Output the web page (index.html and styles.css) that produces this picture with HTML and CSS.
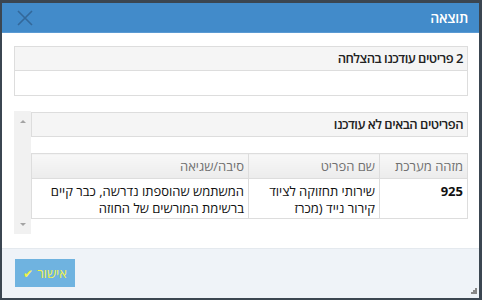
FILE: index.html
```html
<!DOCTYPE html>
<html lang="he" dir="rtl">
<head>
    <meta charset="UTF-8">
    <title>תוצאה</title>
    <link rel="stylesheet" href="styles.css">
</head>
<body>
    <div class="dialog">
        <div class="dialog-head">
            <span class="dialog-title">תוצאה</span>
            <svg class="close" width="16" height="16" viewBox="0 0 16 16">
                <path d="M1 1 L15 15 M15 1 L1 15" stroke="#33689a" stroke-width="1.6" fill="none"/>
            </svg>
        </div>

        <div class="dialog-body">
            <div class="panel">
                <div class="panel-head">2 פריטים עודכנו בהצלחה</div>
                <div class="panel-body"></div>
            </div>

            <div class="scroll-box">
                <div class="scroll-content">
                    <div class="panel-head boxed">הפריטים הבאים לא עודכנו</div>

                    <table>
                        <thead>
                            <tr>
                                <th class="col-id">מזהה מערכת</th>
                                <th class="col-name">שם הפריט</th>
                                <th>סיבה/שגיאה</th>
                            </tr>
                        </thead>
                        <tbody>
                            <tr>
                                <td class="col-id"><b>925</b></td>
                                <td class="col-name">שירותי תחזוקה לציוד קירור נייד (מכרז</td>
                                <td>המשתמש שהוספתו נדרשה, כבר קיים ברשימת המורשים של החוזה</td>
                            </tr>
                        </tbody>
                    </table>
                </div>
                <div class="scrollbar">
                    <span class="arrow up"></span>
                    <span class="arrow down"></span>
                </div>
            </div>
        </div>

        <div class="dialog-foot">
            <button class="btn-ok">אישור <span class="check">&#10004;</span></button>
        </div>

        <svg class="grip" width="7" height="7" viewBox="0 0 7 7">
            <rect x="5" y="0" width="2" height="2" fill="#888"/>
            <rect x="3" y="2" width="2" height="2" fill="#888"/>
            <rect x="5" y="2" width="2" height="2" fill="#888"/>
            <rect x="1" y="4" width="2" height="2" fill="#888"/>
            <rect x="3" y="4" width="2" height="2" fill="#888"/>
            <rect x="5" y="4" width="2" height="2" fill="#888"/>
        </svg>
    </div>
</body>
</html>
```

FILE: styles.css
```css
* {
    box-sizing: border-box;
}

html, body {
    margin: 0;
    height: 300px;
    overflow: hidden;
}

body {
    background-color: #3b4651;
    font-family: "Open Sans", "Liberation Sans", sans-serif;
    font-size: 13px;
    color: #393939;
}

.dialog {
    position: relative;
    margin: 3px 3px 0 2px;
    width: 477px;
    height: 295px;
    background-color: #fff;
    display: flex;
    flex-direction: column;
}

.dialog-head {
    height: 30px;
    background-color: #428bca;
    border-bottom: 1px solid #5a9ad3;
    display: flex;
    align-items: center;
    justify-content: space-between;
    padding: 0 11px 0 15px;
}

.dialog-title {
    color: #fff;
    font-weight: 600;
    font-size: 14px;
    letter-spacing: -0.3px;
}

.dialog-body {
    flex: 1;
    padding: 13px 11px 13px 12px;
}

.panel {
    border: 1px solid #ddd;
}

.panel-head {
    height: 24px;
    line-height: 23px;
    background-color: #f5f5f5;
    border-bottom: 1px solid #ddd;
    padding: 0 4px;
    font-weight: 600;
    letter-spacing: -0.5px;
    color: #222;
}

.panel-body {
    height: 24px;
}

.scroll-box {
    margin-top: 15px;
    height: 123px;
    display: flex;
}

.scroll-content {
    flex: 1;
    padding-top: 1px;
}

.boxed {
    height: 25px;
    border: 1px solid #ddd;
}

.scrollbar {
    width: 17px;
    background-color: #f1f1f1;
    display: flex;
    flex-direction: column;
    justify-content: space-between;
    align-items: center;
    padding: 9px 0 8px;
}

.arrow {
    width: 0;
    height: 0;
    border-left: 3px solid transparent;
    border-right: 3px solid transparent;
}

.arrow.up {
    border-bottom: 3px solid #a3a3a3;
}

.arrow.down {
    border-top: 3px solid #a3a3a3;
}

table {
    width: 100%;
    margin-top: 16px;
    border-collapse: collapse;
}

table th, table td {
    border: 1px solid #ddd;
    text-align: right;
    padding: 0 4px 0 6px;
    vertical-align: top;
}

table th {
    height: 25px;
    font-weight: normal;
    color: #707070;
    background: linear-gradient(#f8f8f8, #ececec);
    vertical-align: middle;
}

table td {
    height: 40px;
    padding-top: 4px;
    line-height: 17px;
    color: #111;
}

.col-id {
    width: 88px;
}

.col-name {
    width: 131px;
}

.dialog-foot {
    height: 50px;
    background-color: #eff3f8;
    border-top: 1px solid #e4e9ee;
    padding: 10px 13px;
    display: flex;
    justify-content: flex-end;
    align-items: flex-start;
}

.btn-ok {
    width: 60px;
    height: 28px;
    border: none;
    background-color: #6fb3e0;
    color: #f2f24a;
    font-family: "Open Sans", "Liberation Sans", sans-serif;
    font-size: 13px;
    display: flex;
    align-items: center;
    justify-content: center;
    gap: 4px;
    padding: 0;
}

.check {
    color: #f2f24a;
    font-size: 12px;
}

.grip {
    position: absolute;
    left: 468px;
    bottom: 3px;
}
```
